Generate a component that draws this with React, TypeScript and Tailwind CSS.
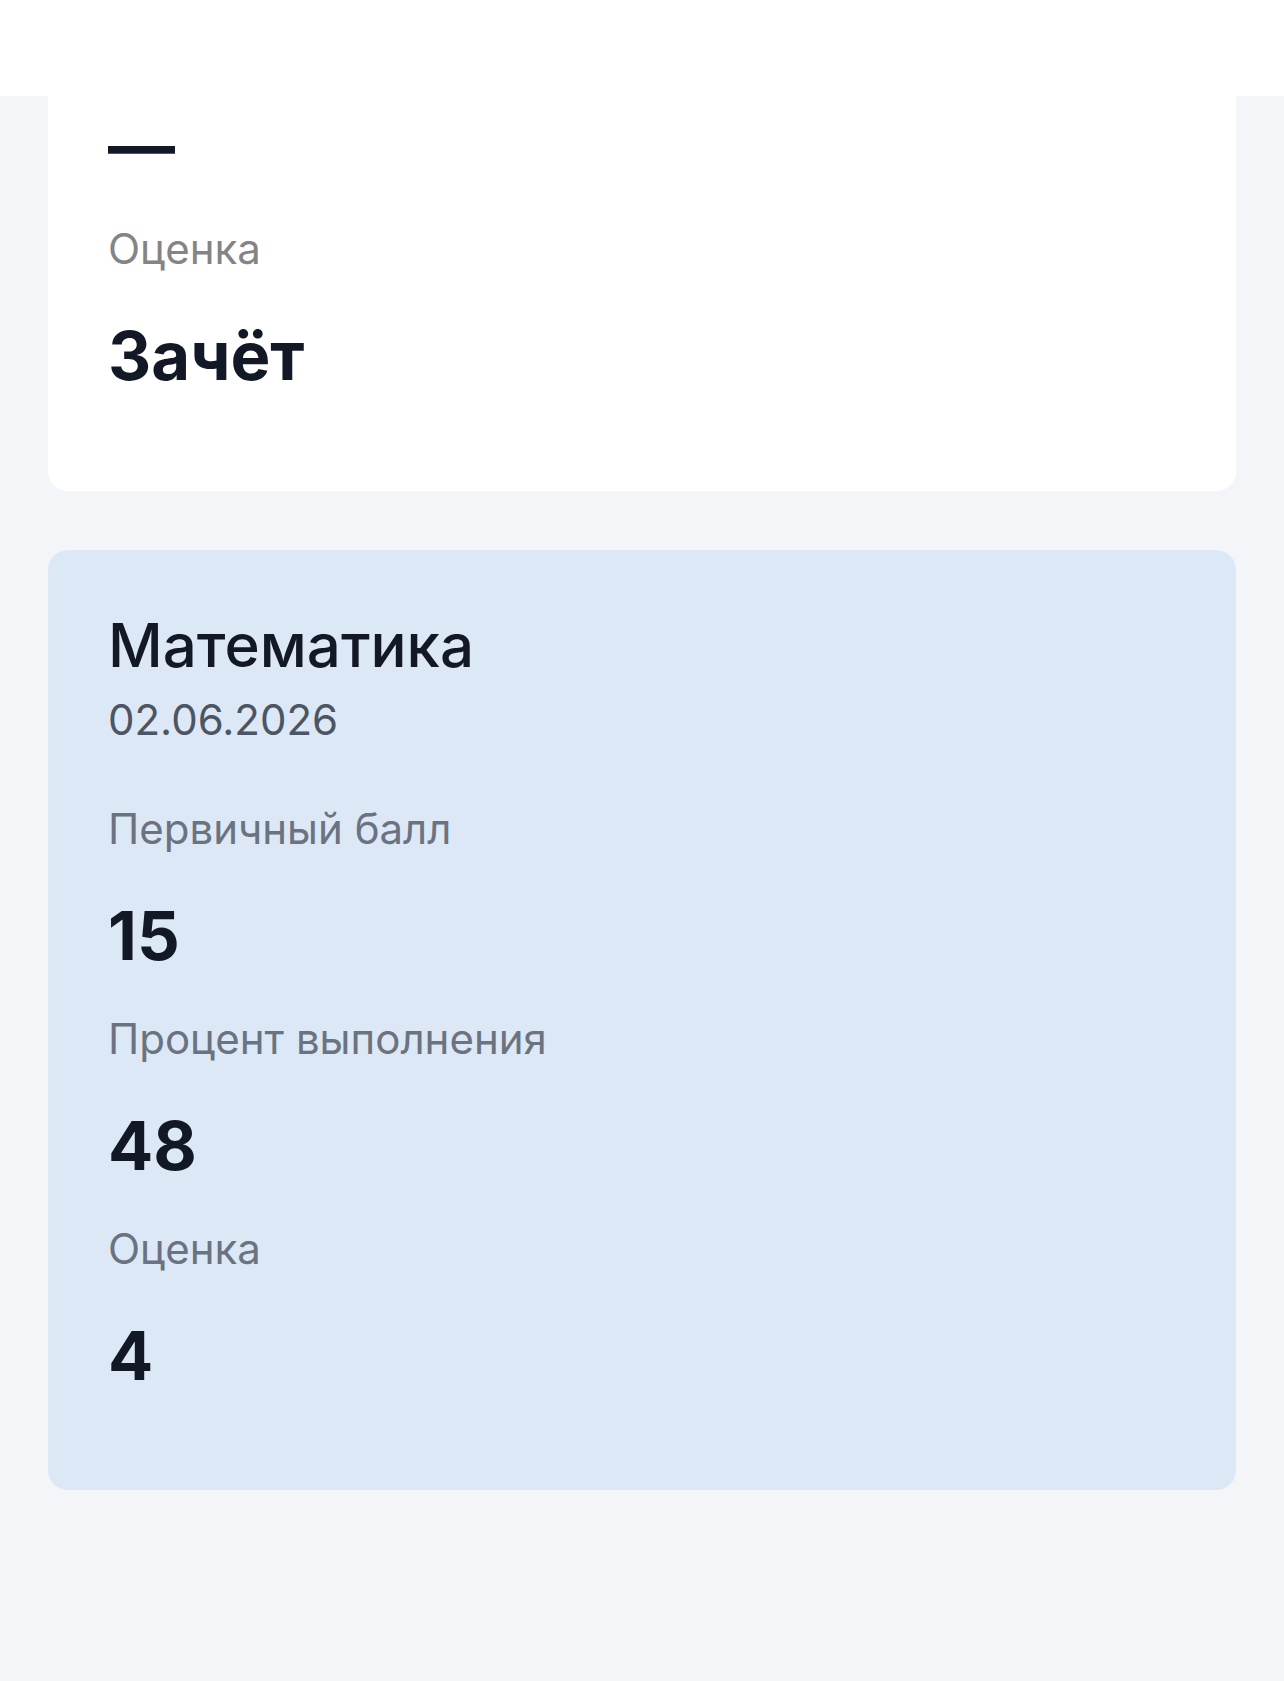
const FIELDS: { label: string; value: string }[] = [
  { label: "Первичный балл", value: "15" },
  { label: "Процент выполнения", value: "48" },
  { label: "Оценка", value: "4" },
];

function Field({
  label,
  value,
  muted,
  first,
}: {
  label: string;
  value: string;
  muted: string;
  first?: boolean;
}) {
  return (
    <div className={first ? "" : "mt-[33px]"}>
      <p className={`text-[42px] leading-[60px] ${muted}`}>{label}</p>
      <p className="mt-[37px] text-[67px] leading-[80px] font-bold text-[#121826]">
        {value}
      </p>
    </div>
  );
}

export default function App() {
  return (
    <div
      className="min-h-screen bg-[#f3f5f8] flex flex-col"
      style={{ fontFamily: "Inter, 'Noto Sans', sans-serif" }}
    >
      {/* Top bar */}
      <div className="h-[96px] bg-white shrink-0" />

      <div className="px-[48px] pb-[80px]">
        {/* Previous result (scrolled) */}
        <div className="bg-white rounded-b-[20px] px-[60px] pt-[10px] pb-[95px]">
          <p className="text-[67px] leading-[80px] font-bold text-[#121826]">—</p>
          <div className="mt-[33px]">
            <p className="text-[42px] leading-[60px] text-[#848484]">Оценка</p>
            <p className="mt-[37px] text-[67px] leading-[80px] font-bold text-[#121826]">
              Зачёт
            </p>
          </div>
        </div>

        {/* Math result */}
        <div className="mt-[59px] bg-[#dde8f7] rounded-[20px] px-[60px] pt-[59px] pb-[94px]">
          <h2 className="text-[60px] leading-[72px] font-medium text-[#121826]">
            Математика
          </h2>
          <p className="mt-[9px] text-[42px] leading-[60px] text-[#4b5563]">
            02.06.2026
          </p>
          <div className="mt-[49px]">
            {FIELDS.map((f, i) => (
              <Field
                key={f.label}
                label={f.label}
                value={f.value}
                muted="text-[#6b7280]"
                first={i === 0}
              />
            ))}
          </div>
        </div>
      </div>
    </div>
  );
}
